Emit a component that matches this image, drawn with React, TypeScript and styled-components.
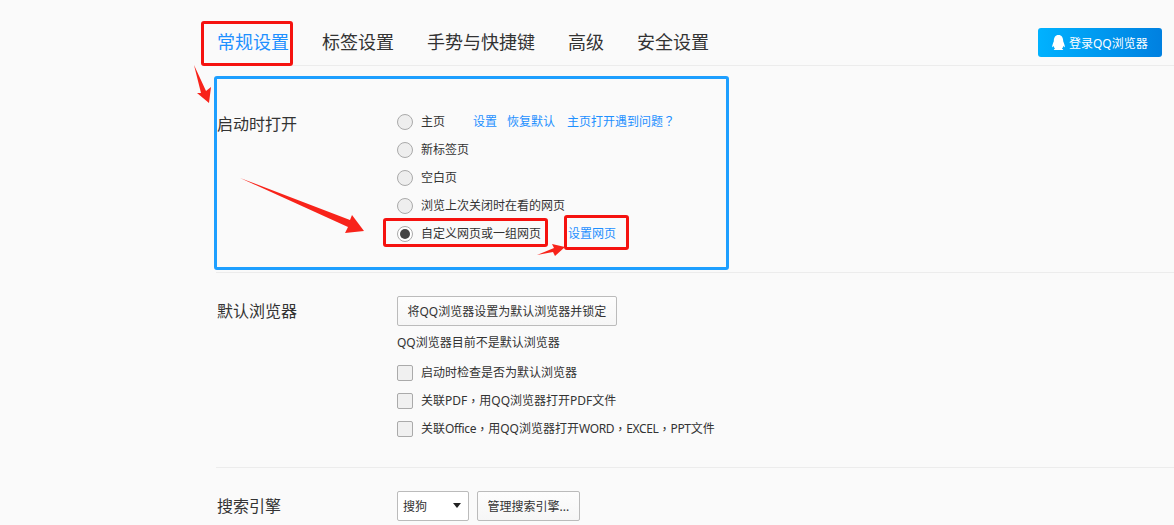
import React from "react";
import styled, { createGlobalStyle } from "styled-components";
import { FaQq } from "react-icons/fa";

const GlobalStyle = createGlobalStyle`
  html, body {
    margin: 0;
    height: 100%;
    overflow: hidden;
    background: #fafafa;
  }
  body {
    font-family: "Noto Sans", "Noto Sans CJK SC", sans-serif;
    color: #333;
  }
`;

const Page = styled.div`
  position: relative;
  width: 1174px;
  height: 525px;
  padding-left: 216px;
  box-sizing: border-box;
  overflow: hidden;
`;

const Header = styled.header`
  display: flex;
  align-items: flex-start;
  justify-content: space-between;
  height: 65px;
  padding-right: 12px;
  border-bottom: 1px solid #ececec;
`;

const Tabs = styled.nav`
  display: flex;
  gap: 33px;
  padding-left: 1px;
`;

const Tab = styled.a<{ $active?: boolean }>`
  height: 65px;
  box-sizing: border-box;
  padding-top: 29px;
  font-size: 18px;
  line-height: 26px;
  white-space: nowrap;
  color: ${(p) => (p.$active ? "#1e90ff" : "#333")};
  border-bottom: 1px solid ${(p) => (p.$active ? "#1e90ff" : "transparent")};
`;

const LoginButton = styled.button`
  display: flex;
  align-items: center;
  gap: 3px;
  width: 124px;
  height: 29px;
  margin-top: 28px;
  padding: 0 0 0 13px;
  border: 0;
  border-radius: 3px;
  background: linear-gradient(90deg, #00b2ff, #0080e0);
  color: #fff;
  font-family: inherit;
  font-size: 12px;
  white-space: nowrap;
`;

const Section = styled.section<{ $top: number }>`
  display: flex;
  padding: ${(p) => p.$top}px 0 25px;
  border-bottom: 1px solid #ececec;
`;

const SectionLabel = styled.div<{ $offset: number }>`
  width: 181px;
  flex: none;
  padding: ${(p) => p.$offset}px 0 0 1px;
  box-sizing: border-box;
  font-size: 16px;
  line-height: 24px;
`;

const Options = styled.div`
  display: flex;
  flex-direction: column;
`;

const OptionRow = styled.div`
  display: flex;
  align-items: center;
  height: 28px;
  font-size: 12px;
  white-space: nowrap;
`;

const Radio = styled.span<{ $checked?: boolean }>`
  display: flex;
  align-items: center;
  justify-content: center;
  width: 16px;
  height: 16px;
  margin: 2px 8px 0 0;
  box-sizing: border-box;
  border: 1px solid #aaa;
  border-radius: 50%;
  background: ${(p) => (p.$checked ? "#fff" : "#eee")};

  &::after {
    content: "";
    display: ${(p) => (p.$checked ? "block" : "none")};
    width: 10px;
    height: 10px;
    border-radius: 50%;
    background: #444;
  }
`;

const Check = styled.span`
  width: 16px;
  height: 16px;
  margin: 2px 8px 0 0;
  box-sizing: border-box;
  border: 1px solid #aaa;
  border-radius: 2px;
  background: #f0f0f0;
`;

// the reference centres full-width punctuation in its cell
const Punct = styled.span`
  font-family: "Noto Sans CJK TC", sans-serif;
`;

// latin capitals run a bit narrower in the reference
const Caps = styled.span`
  letter-spacing: -0.35px;
`;

const LinkText = styled.a<{ $left: number }>`
  margin-left: ${(p) => p.$left}px;
  color: #1e90ff;
`;

const ActionButton = styled.button`
  height: 30px;
  padding: 0 9.5px;
  box-sizing: border-box;
  border: 1px solid #bbb;
  border-radius: 2px;
  background: linear-gradient(#fdfdfd, #f6f6f6);
  color: #333;
  font-family: inherit;
  font-size: 12px;
  white-space: nowrap;
`;

const StatusText = styled.div`
  height: 32px;
  font-size: 12px;
  line-height: 34px;
`;

const Controls = styled.div`
  display: flex;
  gap: 8px;
`;

const SelectBox = styled.div`
  display: flex;
  align-items: center;
  justify-content: space-between;
  width: 72px;
  height: 30px;
  padding: 0 7px 0 5px;
  box-sizing: border-box;
  border: 1px solid #bbb;
  border-radius: 2px;
  background: #fff;
  font-size: 12px;

  &::after {
    content: "";
    margin-top: -2px;
    border-style: solid;
    border-width: 5px 4px 0;
    border-color: #222 transparent transparent;
  }
`;

const Mark = styled.div<{ $x: number; $y: number; $w: number; $h: number; $blue?: boolean }>`
  position: absolute;
  left: ${(p) => p.$x}px;
  top: ${(p) => p.$y}px;
  width: ${(p) => p.$w}px;
  height: ${(p) => p.$h}px;
  box-sizing: border-box;
  border: 3px solid ${(p) => (p.$blue ? "#1e9fff" : "#f5120f")};
  border-radius: 3px;
  pointer-events: none;
`;

const ArrowLayer = styled.svg`
  position: absolute;
  left: 0;
  top: 0;
  pointer-events: none;
`;

export default function App() {
  return (
    <Page>
      <GlobalStyle />
      <Header>
        <Tabs>
          <Tab $active>常规设置</Tab>
          <Tab>标签设置</Tab>
          <Tab>手势与快捷键</Tab>
          <Tab>高级</Tab>
          <Tab>安全设置</Tab>
        </Tabs>
        <LoginButton>
          <FaQq size={15} />
          登录QQ浏览器
        </LoginButton>
      </Header>

      <Section $top={41}>
        <SectionLabel $offset={5}>启动时打开</SectionLabel>
        <Options>
          <OptionRow>
            <Radio />
            主页
            <LinkText $left={28}>设置</LinkText>
            <LinkText $left={10}>恢复默认</LinkText>
            <LinkText $left={12}>
              主页打开遇到问题<Punct>？</Punct>
            </LinkText>
          </OptionRow>
          <OptionRow>
            <Radio />
            新标签页
          </OptionRow>
          <OptionRow>
            <Radio />
            空白页
          </OptionRow>
          <OptionRow>
            <Radio />
            浏览上次关闭时在看的网页
          </OptionRow>
          <OptionRow>
            <Radio $checked />
            自定义网页或一组网页
            <LinkText $left={27}>设置网页</LinkText>
          </OptionRow>
        </Options>
      </Section>

      <Section $top={23}>
        <SectionLabel $offset={3}>默认浏览器</SectionLabel>
        <Options>
          <div>
            <ActionButton>将QQ浏览器设置为默认浏览器并锁定</ActionButton>
          </div>
          <StatusText>QQ浏览器目前不是默认浏览器</StatusText>
          <OptionRow>
            <Check />
            启动时检查是否为默认浏览器
          </OptionRow>
          <OptionRow>
            <Check />
            关联PDF<Punct>，</Punct>用QQ浏览器打开PDF文件
          </OptionRow>
          <OptionRow>
            <Check />
            关联<Caps>Office</Caps><Punct>，</Punct>用QQ浏览器打开<Caps>WORD</Caps><Punct>，</Punct><Caps>EXCEL</Caps><Punct>，</Punct><Caps>PPT</Caps>文件
          </OptionRow>
        </Options>
      </Section>

      <Section $top={23}>
        <SectionLabel $offset={3}>搜索引擎</SectionLabel>
        <Controls>
          <SelectBox>搜狗</SelectBox>
          <ActionButton>管理搜索引擎...</ActionButton>
        </Controls>
      </Section>

      {/* annotations drawn on top of the screenshot */}
      <Mark $x={201} $y={21} $w={92} $h={45} />
      <Mark $blue $x={214} $y={76} $w={515} $h={194} />
      <Mark $x={383} $y={218} $w={165} $h={29} />
      <Mark $x={564} $y={215} $w={65} $h={35} />
      <ArrowLayer width="1174" height="525" viewBox="0 0 1174 525">
        <g fill="#f8231a">
          <polygon points="194,65 206,91 211,87 209,103 197,93 201,93" />
          <polygon points="240,178 350,220 352,215 364,231 345,233 348,227" />
          <polygon points="537,255 554,248 552,244 565,247 555,256 553,252" />
        </g>
      </ArrowLayer>
    </Page>
  );
}
